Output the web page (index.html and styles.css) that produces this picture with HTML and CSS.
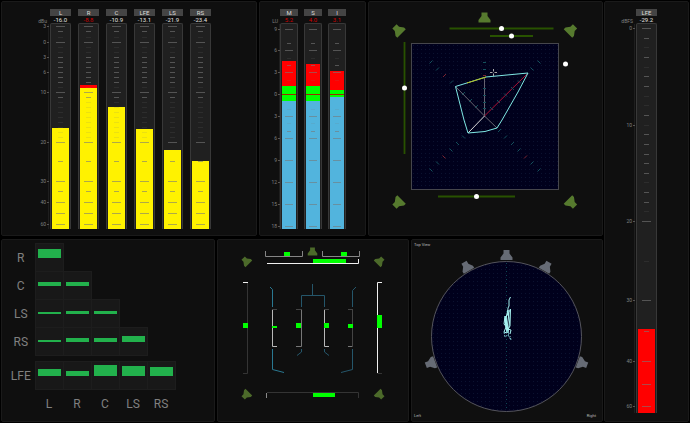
FILE: index.html
```html
<!DOCTYPE html>
<html lang="en">
<head>
  <meta charset="UTF-8">
  <meta name="viewport" content="width=device-width, initial-scale=1.0">
  <title>Surround Metering</title>
  <link rel="stylesheet" href="styles.css">
</head>
<body>
  <!-- Shared shapes -->
  <svg class="defs" aria-hidden="true">
    <defs>
      <path id="speaker" d="M-3 -5H3V-1.5L6 2.5V5H-6V2.5L-3 -1.5Z"/>
      <pattern id="dots" width="4" height="4" patternUnits="userSpaceOnUse">
        <rect width="4" height="4" fill="#00001c"/>
        <rect x="1" y="1" width="1" height="1" fill="#0b1230"/>
      </pattern>
    </defs>
  </svg>

  <div class="dashboard">
    <div class="main">
      <div class="row row-top">
        <!-- Peak meters -->
        <section class="panel meters" data-scale="peak">
          <div class="scale"><span class="unit">dBu</span><div class="scale-marks"></div></div>
          <div class="meter">
            <div class="name">L</div><div class="value">-16.0</div>
            <div class="track"><div class="bar yellow" style="height: 49.4%"></div></div>
          </div>
          <div class="meter">
            <div class="name">R</div><div class="value over">-8.8</div>
            <div class="track">
              <div class="bar red" style="height: 1.5%"></div>
              <div class="bar yellow" style="height: 69%"></div>
            </div>
          </div>
          <div class="meter">
            <div class="name">C</div><div class="value">-10.9</div>
            <div class="track"><div class="bar yellow" style="height: 59.4%"></div></div>
          </div>
          <div class="meter">
            <div class="name">LFE</div><div class="value">-13.1</div>
            <div class="track"><div class="bar yellow" style="height: 48.8%"></div></div>
          </div>
          <div class="meter">
            <div class="name">LS</div><div class="value">-21.9</div>
            <div class="track"><div class="bar yellow" style="height: 38.4%"></div></div>
          </div>
          <div class="meter">
            <div class="name">RS</div><div class="value">-23.4</div>
            <div class="track"><div class="bar yellow" style="height: 33%"></div></div>
          </div>
        </section>

        <!-- Loudness meters -->
        <section class="panel meters loudness" data-scale="loudness">
          <div class="scale"><span class="unit">LU</span><div class="scale-marks"></div></div>
          <div class="meter">
            <div class="name">M</div><div class="value over">5.2</div>
            <div class="track">
              <div class="bar red" style="height: 12.2%"></div>
              <div class="bar green" style="height: 7.2%"></div>
              <div class="bar blue" style="height: 62.4%"></div>
            </div>
          </div>
          <div class="meter">
            <div class="name">S</div><div class="value over">4.0</div>
            <div class="track">
              <div class="bar red" style="height: 10.7%"></div>
              <div class="bar green" style="height: 7.2%"></div>
              <div class="bar blue" style="height: 62.4%"></div>
            </div>
          </div>
          <div class="meter">
            <div class="name">I</div><div class="value over">3.1</div>
            <div class="track">
              <div class="bar red" style="height: 9.2%"></div>
              <div class="bar green" style="height: 3.4%"></div>
              <div class="bar blue" style="height: 64.3%"></div>
            </div>
          </div>
        </section>

        <!-- Surround vector display -->
        <section class="panel">
          <svg class="drawing" viewBox="369 2 233 233" role="img" aria-label="Surround vector display">
            <g fill="#567a2e">
              <use href="#speaker" transform="translate(484.5 17.5)"/>
              <use href="#speaker" transform="translate(398 30) rotate(-45)"/>
              <use href="#speaker" transform="translate(571.5 30) rotate(45)"/>
              <use href="#speaker" transform="translate(398 203) rotate(-135)"/>
              <use href="#speaker" transform="translate(571.5 203) rotate(135)"/>
            </g>
            <path d="M449.5 28.5H553.5M490 36H533M404.5 42V154M438 196.5H515" stroke="#285200" stroke-width="1.8"/>
            <g fill="#fff">
              <circle cx="501.5" cy="28.5" r="2.5"/>
              <circle cx="511.5" cy="36" r="2.5"/>
              <circle cx="404.5" cy="88" r="2.5"/>
              <circle cx="476.5" cy="196.5" r="2.5"/>
              <circle cx="565.5" cy="64" r="2.5"/>
            </g>
            <rect x="411.5" y="43.5" width="147" height="146" fill="url(#dots)" stroke="#46464c"/>
            <path stroke="#14505c" d="M429.500 63.500l3 -3M436 70.500l3 -3M450 83.500l3 -3M537.500 60.500l3 3M530.500 67.500l3 3
              M462 135.500l3 3M456 142l3 3M449.500 148.500l3 3M436 161.500l3 3M429.500 168.500l3 3
              M504 138.500l3 -3M511 145l3 -3M517.500 151.500l3 -3M530.500 164.500l3 -3M537.500 171.500l3 -3M498 132l3 -3
              M483 62.500h3M483 69.500h3"/>
            <path stroke="#7c2430" d="M443 77l3 -3M442.500 155.500l3 3M524 158.500l3 -3M483 75.500h3"/>
            <path d="M484.500 116L455.500 86.500M484.500 116V78M484.500 116L497 128" stroke="#66636f" fill="none"/>
            <path d="M484.500 116L528 73" stroke="#b01238"/>
            <path d="M484.500 116L468 133" stroke="#ddd"/>
            <path stroke="#14505c" d="M462 95l3 -3M469 102l3 -3M475 108l3 -3M490 107l3 3M497 100l3 3M504 93.500l3 3M511 87l3 3M518 80.500l3 3
              M483 88.500h3M483 95.500h3M483 102.500h3M483 108.500h3"/>
            <path d="M455.500 86.500L470 82L486 77L528 73L518 92L502 120L497 128L485 131.500L468 133L464 120Z" fill="none" stroke="#7fe8e4" stroke-linejoin="round"/>
            <path d="M467 83L486 77" stroke="#b5bd16"/>
            <path d="M493.500 69V71.500M493.500 73.500V76M490 72.500H492.500M494.500 72.500H497" stroke="#aaa"/>
          </svg>
        </section>
      </div>

      <div class="row row-bottom">
        <!-- Correlation matrix -->
        <section class="panel">
          <table class="matrix">
            <tbody>
              <tr>
                <th scope="row">R</th>
                <td><div class="half"><div class="corr" style="height: 9px"></div></div></td>
              </tr>
              <tr>
                <th scope="row">C</th>
                <td><div class="half"><div class="corr" style="height: 4px"></div></div></td>
                <td><div class="half"><div class="corr" style="height: 4px"></div></div></td>
              </tr>
              <tr>
                <th scope="row">LS</th>
                <td><div class="half"><div class="corr" style="height: 2px"></div></div></td>
                <td><div class="half"><div class="corr" style="height: 3px"></div></div></td>
                <td><div class="half"><div class="corr" style="height: 3px"></div></div></td>
              </tr>
              <tr>
                <th scope="row">RS</th>
                <td><div class="half"><div class="corr" style="height: 2px"></div></div></td>
                <td><div class="half"><div class="corr" style="height: 4px"></div></div></td>
                <td><div class="half"><div class="corr" style="height: 4px"></div></div></td>
                <td><div class="half"><div class="corr" style="height: 6px"></div></div></td>
              </tr>
            </tbody>
            <tbody>
              <tr class="spacer"></tr>
              <tr>
                <th scope="row">LFE</th>
                <td><div class="half"><div class="corr" style="height: 7px"></div></div></td>
                <td><div class="half"><div class="corr" style="height: 5px"></div></div></td>
                <td><div class="half"><div class="corr" style="height: 11px"></div></div></td>
                <td><div class="half"><div class="corr" style="height: 10px"></div></div></td>
                <td><div class="half"><div class="corr" style="height: 9px"></div></div></td>
              </tr>
            </tbody>
            <tfoot>
              <tr>
                <th></th>
                <th scope="col">L</th>
                <th scope="col">R</th>
                <th scope="col">C</th>
                <th scope="col">LS</th>
                <th scope="col">RS</th>
              </tr>
            </tfoot>
          </table>
        </section>

        <!-- Channel phase display -->
        <section class="panel">
          <svg class="drawing" viewBox="218 240 190 181" role="img" aria-label="Channel phase display">
            <g fill="#4c6a2a">
              <use href="#speaker" transform="translate(312.500 251.500) scale(.8)"/>
              <use href="#speaker" transform="translate(246 261) rotate(-45) scale(.8)"/>
              <use href="#speaker" transform="translate(380 261) rotate(45) scale(.8)"/>
              <use href="#speaker" transform="translate(246 395) rotate(-135) scale(.8)"/>
              <use href="#speaker" transform="translate(380 395) rotate(135) scale(.8)"/>
            </g>
            <g fill="none">
              <path stroke="#858585" d="M265.500 251V256.500H302.500V251M322.500 251V256.500H359.500V251"/>
              <path stroke="#f0f0f0" d="M267 263.500H358.500V259M382 282.500H377.500V373M243 282.500H248"/>
              <path stroke="#343434" d="M247.500 283V373.500H243M377.500 373.500H382M267 392.500H358.500V398"/>
              <path stroke="#8a8a8a" d="M266.500 393V398"/>
              <path stroke="#b8b8b8" d="M272.500 310V346.500H277M324.500 310V346.500H329"/>
              <path stroke="#777" d="M301.500 310V346.500H296M352.500 346.500H348"/>
              <path stroke="#444" d="M352.500 310V346M272 309.500H277M296 309.500H302M324 309.500H329M348 309.500H353"/>
              <path stroke="#2a7891" d="M270 287L272.500 289.500V307M272.500 349V369.500L284 372.500"/>
              <path stroke="#25566a" d="M312.500 284V295.500M301.500 307V295.500H324.500V307M356 287L352.500 290.500V307
                M301.500 349V352L297 355.500M324.500 349V352L329 355.500M352.500 349V369.500L341 372.500"/>
            </g>
            <g fill="#0f0">
              <rect x="284" y="252" width="6" height="4"/>
              <rect x="341" y="252" width="6" height="4"/>
              <rect x="313" y="259" width="33" height="4"/>
              <rect x="243" y="323" width="5" height="5"/>
              <rect x="377" y="315" width="5" height="13"/>
              <rect x="272" y="326" width="5" height="2"/>
              <rect x="296" y="323" width="5" height="5"/>
              <rect x="324" y="323" width="5" height="5"/>
              <rect x="348" y="324" width="5" height="4"/>
              <rect x="313" y="393" width="22" height="4"/>
            </g>
          </svg>
        </section>

        <!-- Top view scope -->
        <section class="panel scope">
          <div class="scope-text">Top View</div>
          <svg class="drawing" viewBox="412 248 190 165" role="img" aria-label="Top view scope">
            <circle cx="506.500" cy="336.500" r="75" fill="url(#dots)" stroke="#54545c"/>
            <path d="M506.500 263V411" stroke="#0e4654" stroke-dasharray="1 3"/>
            <g fill="#666b75">
              <use href="#speaker" transform="translate(506.500 255)"/>
              <use href="#speaker" transform="translate(466.500 266.500) rotate(-30)"/>
              <use href="#speaker" transform="translate(546.500 266.500) rotate(30)"/>
              <use href="#speaker" transform="translate(430.500 363.500) rotate(-110)"/>
              <use href="#speaker" transform="translate(582.500 363.500) rotate(110)"/>
            </g>
            <path d="M510.500 297L509 300V306L508 308L507.500 315L505 318L506 327L504 332L507 333L505 321L508 310L509.500 322L508 333L506 316L507 329L509 312L510.500 309L510 326L507 331L505 316L504 324L508 329L511 330L510 334"
              fill="none" stroke="#a6f3f1" stroke-linejoin="round"/>
            <path d="M504 332L505 337L509 334L507 330M508 335L511 340L510 336" fill="none" stroke="#79c4cc" stroke-dasharray="2 1"/>
          </svg>
          <div class="scope-text scope-footer"><span>Left</span><span>Right</span></div>
        </section>
      </div>
    </div>

    <!-- LFE meter -->
    <section class="panel meters lfe" data-scale="lfe">
      <div class="scale"><span class="unit">dBFS</span><div class="scale-marks"></div></div>
      <div class="meter">
        <div class="name">LFE</div><div class="value">-29.2</div>
        <div class="track"><div class="bar red" style="height: 21.5%"></div></div>
      </div>
    </section>
  </div>

  <script>
    // points: [level, position in % from the top of the track]
    const scales = {
      peak: {
        points: [[-3, 1], [0, 8.7], [10, 33.3], [20, 57.5], [30, 76.5], [40, 86.7], [60, 97.8]],
        labels: [-3, 0, 3, 6, 10, 20, 30, 40, 60],
        long: [-3, 0, 10, 20, 30, 40, 50, 60],
        short: [-2, 3, 4, 5, 6, 7, 8, 11, 25, 35],
        faint: [-1, 1, 2, 9, 12, 13, 14, 15, 16, 17, 18, 19]
      },
      loudness: {
        points: [[-9, 2.2], [18, 98.3]],
        labels: [-9, -6, -3, 0, 3, 6, 9, 12, 15, 18],
        long: [-9, -6, -3, 3, 6, 9, 12, 15, 18],
        short: [-7, -4, 5],
        faint: [-5, -2, 2, 4],
        zero: true
      },
      lfe: {
        points: [[0, 1], [10, 25.9], [20, 50.6], [30, 71], [40, 86.7], [60, 98.2]],
        labels: [0, 10, 20, 30, 40, 60],
        long: [0, 20, 30, 40, 50, 60],
        short: [1, 3, 5, 6, 9, 11, 12, 13, 14, 15, 17, 18, 35],
        faint: [2, 4, 7, 8, 10, 16, 19, 25]
      }
    };

    function position(points, level) {
      for (let i = 1; i < points.length; i++) {
        const [a, pa] = points[i - 1];
        const [b, pb] = points[i];
        if (level <= b) {
          return pa + (pb - pa) * (level - a) / (b - a);
        }
      }
      return 100;
    }

    function addMark(parent, className, top, text) {
      const mark = document.createElement("span");
      mark.className = className;
      mark.style.top = top + "%";
      mark.textContent = text || "";
      parent.appendChild(mark);
    }

    document.querySelectorAll(".meters").forEach(panel => {
      const scale = scales[panel.dataset.scale];
      const marks = panel.querySelector(".scale-marks");

      scale.labels.forEach(level => {
        addMark(marks, "scale-label", position(scale.points, level), String(Math.abs(level)));
      });

      panel.querySelectorAll(".track").forEach(track => {
        scale.long.forEach(level => addMark(track, "tick long", position(scale.points, level)));
        scale.short.forEach(level => addMark(track, "tick", position(scale.points, level)));
        scale.faint.forEach(level => addMark(track, "tick faint", position(scale.points, level)));
        if (scale.zero) {
          addMark(track, "tick zero", position(scale.points, 0));
        }
      });
    });
  </script>
</body>
</html>
```
FILE: styles.css
```css
* {
  box-sizing: border-box;
}

body {
  margin: 0;
  background-color: #000;
  color: #808080;
  font-family: Roboto, "Liberation Sans", sans-serif;
}

.defs {
  position: absolute;
  width: 0;
  height: 0;
}

.dashboard {
  display: grid;
  grid-template-columns: 602fr 85fr;
  gap: 1px;
  min-height: 100vh;
  padding: 1px;
}

.main {
  display: grid;
  grid-template-rows: 235fr 183fr;
  gap: 3px;
}

.row {
  display: grid;
  gap: 2px;
}

.row-top {
  grid-template-columns: 256fr 107fr 235fr;
}

.row-bottom {
  grid-template-columns: 214fr 192fr 192fr;
}

.panel {
  min-width: 0;
  min-height: 0;
  background-color: #0f0f0f;
  border: 1px solid #1a1a1a;
  border-radius: 2px;
}

.drawing {
  display: block;
  width: 100%;
  height: 100%;
}

/* Meters */
.meters {
  display: flex;
  gap: 7px;
  padding: 7px 0 6px;
}

.loudness {
  gap: 6px;
}

.lfe {
  padding-bottom: 8px;
}

.scale {
  display: flex;
  flex-direction: column;
  width: 41px;
  padding-top: 9px;
  font-size: 5px;
  line-height: 6px;
  text-align: right;
}

.loudness .scale {
  width: 14px;
}

.lfe .scale {
  width: 24px;
}

.unit {
  margin-right: -4px;
}

.scale-marks {
  position: relative;
  flex: 1;
  margin-right: -6px;
  border-right: 1px solid #1e1e1e;
}

.scale-label {
  position: absolute;
  right: 2px;
  transform: translateY(-50%);
}

.scale-label::after {
  content: "";
  position: absolute;
  top: 3px;
  right: -3px;
  width: 2px;
  height: 1px;
  background-color: #555;
}

.meter {
  display: flex;
  flex-direction: column;
  width: 21px;
  text-align: center;
}

.loudness .meter {
  width: 18px;
}

.name {
  height: 7px;
  background-color: #444;
  color: #ddd;
  font-size: 6px;
  line-height: 7px;
}

.value {
  height: 7px;
  color: #e4e4e4;
  font-size: 6px;
  line-height: 8px;
}

.over {
  color: #d00000;
}

.track {
  position: relative;
  display: flex;
  flex: 1;
  flex-direction: column;
  justify-content: flex-end;
  padding: 0 1px;
  background-color: #202020;
  border: solid #383838;
  border-width: 1px 1px 0;
  border-radius: 2px 2px 0 0;
}

.bar {
  flex: none;
}

.yellow {
  background-color: #fff200;
}

.red {
  background-color: #f00;
}

.green {
  background-color: #0f0;
}

.blue {
  background-color: #52b4dd;
}

.tick {
  position: absolute;
  left: 7px;
  right: 7px;
  height: 1px;
  background-color: rgba(120, 120, 120, 0.6);
}

.long {
  left: 5px;
  right: 5px;
}

.loudness .tick {
  left: 6px;
  right: 6px;
}

.loudness .long {
  left: 4px;
  right: 4px;
}

.faint {
  background-color: rgba(120, 120, 120, 0.15);
}

.loudness .zero {
  left: 1px;
  right: 1px;
  background-color: #a02800;
}

/* Correlation matrix */
.matrix {
  margin: 3px 0 0 5px;
  border-collapse: collapse;
  font-size: 12px;
}

.matrix th {
  width: 28px;
  height: 28px;
  padding: 0;
  font-weight: 400;
}

.matrix td {
  width: 28px;
  height: 28px;
  padding: 0;
  background-color: #181818;
  border: 1px solid #1d1d1d;
  vertical-align: top;
}

.matrix .spacer {
  height: 6px;
}

.half {
  display: flex;
  align-items: flex-end;
  height: 14px;
  padding: 0 2px;
}

.corr {
  flex: 1;
  background-color: #22b14c;
}

/* Top view scope */
.scope {
  display: flex;
  flex-direction: column;
}

.scope .drawing {
  flex: 1;
  min-height: 0;
}

.scope-text {
  padding: 2px 2px 0;
  color: #bbb;
  font-size: 4px;
  line-height: 6px;
}

.scope-footer {
  display: flex;
  justify-content: space-between;
  padding: 0 6px 2px 2px;
}
```
